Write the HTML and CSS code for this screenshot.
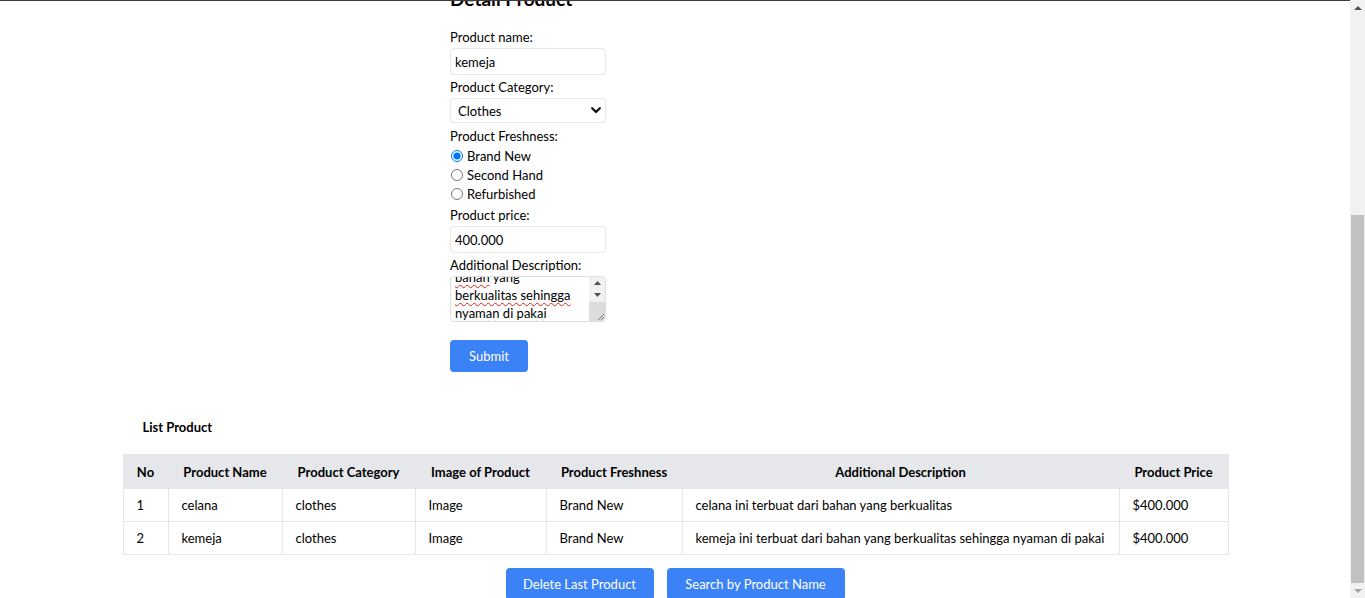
FILE: index.html
```html
<!DOCTYPE html>
<html lang="en">
<head>
<meta charset="utf-8">
<title>Detail Product</title>
<link rel="stylesheet" href="styles.css">
</head>
<body>
<div class="screen">
  <div class="viewport">
    <div class="page">
      <form class="detail">
        <h2 class="title">Detail Product</h2>
        <label class="lbl first">Product name:</label>
        <input class="ctl" type="text" value="kemeja" spellcheck="false">
        <label class="lbl">Product Category:</label>
        <div class="sel-wrap">
          <select class="ctl sel"><option>Clothes</option></select>
          <svg class="chev" width="10" height="7" viewBox="0 0 10 7"><path d="M1.2 1.2 L5 5 L8.8 1.2" fill="none" stroke="#111" stroke-width="2.2" stroke-linecap="round" stroke-linejoin="round"/></svg>
        </div>
        <label class="lbl">Product Freshness:</label>
        <div class="radios">
          <label class="opt"><input type="radio" name="f" checked>Brand New</label>
          <label class="opt"><input type="radio" name="f">Second Hand</label>
          <label class="opt"><input type="radio" name="f">Refurbished</label>
        </div>
        <label class="lbl">Product price:</label>
        <input class="ctl" type="text" value="400.000" spellcheck="false">
        <label class="lbl">Additional Description:</label>
        <div class="desc">
          <div class="desc-text">
            <div class="desc-inner">
              <span class="ln">kemeja ini terbuat dari</span>
              <span class="ln"><span class="sp">bahan</span> yang</span>
              <span class="ln"><span class="sp">berkualitas sehingga</span></span>
              <span class="ln"><span class="sp">nyaman</span> di <span class="sp">pakai</span></span>
            </div>
          </div>
          <div class="desc-bar">
            <span class="arr"><svg width="7" height="4" viewBox="0 0 7 4"><path d="M0 4 L3.5 0 L7 4 Z" fill="#505050"/></svg></span>
            <span class="arr"><svg width="7" height="4" viewBox="0 0 7 4"><path d="M0 0 L7 0 L3.5 4 Z" fill="#505050"/></svg></span>
            <span class="grip"><svg width="8" height="8" viewBox="0 0 8 8"><path d="M8 2 L2 8 M8 5 L5 8" stroke="#777" stroke-width="1"/></svg></span>
          </div>
        </div>
        <button class="btn submit" type="button">Submit</button>
      </form>

      <section class="list">
        <h3 class="list-title">List Product</h3>
        <table class="tbl">
          <colgroup>
            <col style="width:45px"><col style="width:114px"><col style="width:133px"><col style="width:131px"><col style="width:136px"><col style="width:437px"><col style="width:109px">
          </colgroup>
          <thead>
            <tr><th>No</th><th>Product Name</th><th>Product Category</th><th>Image of Product</th><th>Product Freshness</th><th>Additional Description</th><th>Product Price</th></tr>
          </thead>
          <tbody>
            <tr><td>1</td><td>celana</td><td>clothes</td><td>Image</td><td>Brand New</td><td>celana ini terbuat dari bahan yang berkualitas</td><td>$400.000</td></tr>
            <tr><td>2</td><td>kemeja</td><td>clothes</td><td>Image</td><td>Brand New</td><td>kemeja ini terbuat dari bahan yang berkualitas sehingga nyaman di pakai</td><td>$400.000</td></tr>
          </tbody>
        </table>
        <div class="actions">
          <button class="btn btn-delete" type="button">Delete Last Product</button>
          <button class="btn btn-search" type="button">Search by Product Name</button>
        </div>
      </section>
    </div>
  </div>
  <div class="sb">
    <span class="sb-arr"><svg width="8" height="4" viewBox="0 0 8 4"><path d="M0 4 L4 0 L8 4 Z" fill="#505050"/></svg></span>
    <div class="sb-track"><div class="sb-thumb"></div></div>
    <span class="sb-arr"><svg width="8" height="4" viewBox="0 0 8 4"><path d="M0 0 L8 0 L4 4 Z" fill="#a3a3a3"/></svg></span>
  </div>
</div>
</body>
</html>
```

FILE: styles.css
```css
body {
  margin: 0;
  font-family: Lato, "Liberation Sans", sans-serif;
  font-size: 13px;
  color: #000;
  background: #fff;
}

.screen {
  display: flex;
  height: 598px;
  overflow: hidden;
}

.viewport {
  flex: 1;
  border-top: 1px solid #3f3939;
  overflow: hidden;
}

.page {
  margin-top: -16px;
}

/* ---------- form ---------- */
.detail {
  width: 450px;
  margin: 0 auto;
}

.title {
  font-size: 19px;
  line-height: 28px;
  font-weight: 700;
  margin: 0 0 14px;
}

.lbl {
  display: block;
  line-height: 20px;
  margin-top: 2px;
}

.lbl.first {
  margin-top: 0;
}

.ctl {
  display: block;
  box-sizing: border-box;
  width: 156px;
  height: 27px;
  margin: 1px 0 0;
  padding: 0 4px;
  border: 1px solid #e5e7eb;
  border-radius: 4px;
  font: inherit;
  color: #000;
  background: #fff;
  outline: none;
}

.sel-wrap {
  position: relative;
  width: 156px;
  margin-top: 1px;
  padding-bottom: 1px;
}

.sel {
  height: 25px;
  margin: 0;
  padding: 0 7px;
  appearance: none;
  -webkit-appearance: none;
}

.chev {
  position: absolute;
  right: 5px;
  top: 9px;
  pointer-events: none;
}

.radios {
  display: flex;
  flex-direction: column;
}

.opt {
  display: flex;
  align-items: center;
  height: 19px;
}

.opt input {
  width: 12px;
  height: 12px;
  margin: 0 4px 0 1px;
}

.desc {
  display: flex;
  box-sizing: border-box;
  width: 156px;
  height: 46px;
  margin-top: 1px;
  border: 1px solid #dedede;
  border-radius: 4px;
  overflow: hidden;
  background: #fff;
}

.desc-text {
  flex: 1;
  overflow: hidden;
  padding-left: 4px;
}

.desc-inner {
  margin-top: -27px;
  line-height: 18px;
}

.ln {
  display: block;
  white-space: nowrap;
}

.sp {
  text-decoration: underline wavy #e0201a;
  text-decoration-skip-ink: none;
  text-decoration-thickness: 1px;
  text-underline-offset: 2px;
}

.desc-bar {
  width: 16px;
  display: flex;
  flex-direction: column;
  background: #f1f1f1;
}

.arr {
  height: 12px;
  display: flex;
  align-items: center;
  justify-content: center;
}

.grip {
  margin-top: auto;
  height: 18px;
  background: #dcdcdc;
  display: flex;
  align-items: flex-end;
  justify-content: flex-end;
  padding: 0 1px 1px 0;
}

.btn {
  display: inline-flex;
  align-items: center;
  justify-content: center;
  height: 32px;
  padding: 0;
  border: 0;
  border-radius: 4px;
  background: #3b82f6;
  color: #fff;
  font: inherit;
}

.submit {
  width: 78px;
  margin-top: 18px;
}

/* ---------- list ---------- */
.list {
  width: 1105px;
  margin: 45px auto 0;
}

.list-title {
  font-size: 13px;
  line-height: 20px;
  font-weight: 700;
  margin: 0 0 17px;
  padding-left: 20px;
}

.tbl {
  width: 1105px;
  border-collapse: collapse;
  table-layout: fixed;
}

.tbl th {
  height: 33px;
  padding: 0 13px;
  background: #e5e7eb;
  border: 1px solid #e5e7eb;
  font-weight: 700;
  text-align: center;
  white-space: nowrap;
}

.tbl td {
  height: 32px;
  padding: 0 13px;
  border: 1px solid #e5e7eb;
  text-align: left;
  white-space: nowrap;
}

.actions {
  display: flex;
  justify-content: center;
  gap: 13px;
  margin-top: 13px;
}

.btn-delete {
  width: 148px;
}

.btn-search {
  width: 178px;
}

/* ---------- page scrollbar ---------- */
.sb {
  width: 15px;
  background: #f1f1f1;
  display: flex;
  flex-direction: column;
}

.sb-arr {
  height: 15px;
  display: flex;
  align-items: center;
  justify-content: center;
}

.sb-track {
  flex: 1;
  display: flex;
  flex-direction: column;
  justify-content: flex-end;
  align-items: center;
}

.sb-thumb {
  width: 13px;
  height: 368px;
  background: #c1c1c1;
}
```
